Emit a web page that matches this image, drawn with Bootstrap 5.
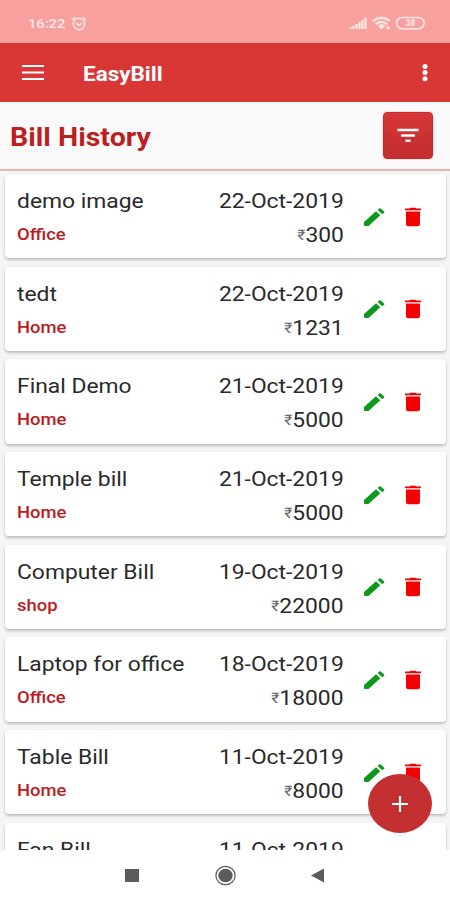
<!DOCTYPE html>
<html lang="en">
<head>
<meta charset="utf-8">
<meta name="viewport" content="width=device-width, initial-scale=1">
<title>EasyBill</title>
<link href="https://cdn.jsdelivr.net/npm/bootstrap@5.3.0/dist/css/bootstrap.min.css" rel="stylesheet">
<style>
body{font-family:Roboto,"Liberation Sans",sans-serif;background:#fff;color:#2a2a2a}
.screen{width:450px;height:900px}
.wide{display:inline-block;white-space:nowrap;transform:scaleX(1.088);transform-origin:0 50%}
.wide-end{transform-origin:100% 50%}
.status{height:43px;background:#f8a09e;color:#ffe9e7;padding:3px 25px 0 28px}
.clock{font-size:13.5px;font-weight:500;line-height:16px;width:43px}
.appbar{height:59px;background:#d93636;border-top:1px solid #cf3032;padding:0 20px 0 22px}
.brand{font-size:21px;font-weight:700;line-height:24px;margin:1px 0 0 39px;transform:scaleX(1.07)}
.page-head{height:69px;background:#fafafa;border-bottom:2px solid #e5b3b3;padding:0 17px 0 10px}
.page-title{font-size:26px;font-weight:700;color:#bd1e22;line-height:30px;margin-top:2px;transform:scaleX(1.098)}
.filter-btn{width:50px;height:47px;border-radius:4px;border:1px solid #c32c2f;background:linear-gradient(#d63638,#c22e30);box-shadow:0 0 2px #d99}
.bills{height:679px;background:#f5f5f5;padding:3px 4px 0 5px}
.bill{height:84.3px;margin-bottom:8.4px;background:#fff;border:0;border-radius:4px;box-shadow:0 2px 3px rgba(0,0,0,.22),0 0 2px rgba(0,0,0,.06);padding:14px 25px 0 12px;flex:none}
.line-big{font-size:21px;line-height:26px}
.kind{font-size:16px;font-weight:500;line-height:26px;color:#bd1a1e}
.kind .wide{transform:scaleX(1.15)}
.dates{margin-right:-1px}
.rupee{font-size:14.5px;color:#666;vertical-align:2px}
.gap-lines{margin-top:8px}
.tools{margin:18.500px 0 0 20.500px;gap:20px;height:21px}
.navkeys{height:49px;padding-top:1px}
.fab{left:368px;top:774px;width:64px;height:59px;border-radius:50%;background:#c43032}
svg{display:block;flex:none}
</style>
<script src="https://cdn.jsdelivr.net/npm/bootstrap@5.3.0/dist/js/bootstrap.bundle.min.js"></script>
</head>
<body>
<svg width="0" height="0" class="position-absolute">
<symbol id="pen" viewBox="0 0 22 20" preserveAspectRatio="none"><path fill="#0b9a1c" d="M1 15 13 4.300l4.300 4L5.500 19H2Q1 19 1 18zM14.600 3 16.200 1.500q.8-.6 1.600 0l3.300 2.900q.7.700 0 1.400L19.300 7.300z"/></symbol>
<symbol id="bin" viewBox="0 0 16 20" preserveAspectRatio="none"><path fill="#f40000" d="M0 1.500H4.500L5.500.7h5l1 .8H16V3.200H0zM1 4.600H15V17.300Q15 19.200 12.800 19.200H3.200Q1 19.200 1 17.300z"/></symbol>
</svg>
<main class="screen position-relative overflow-hidden">
<div class="status d-flex align-items-center">
<div class="clock"><span class="wide">16:22</span></div>
<svg class="me-auto" width="16" height="15" viewBox="0 0 16 15" fill="none" stroke="#ffe9e7" stroke-width="1.400"><circle cx="8" cy="8" r="5.700"/><path d="M1 4 4 1.200M15 4 12 1.200M5 7l3 2.500L11 7"/></svg>
<svg width="76" height="14" viewBox="0 0 76 14"><g stroke="#ffe9e7" fill="none"><path stroke-width="2.200" d="M1.500 13v-2M4.500 13V9.800M7.500 13V8M10.500 13V6M13.500 13V4M16.500 13V1.500"/><path stroke-width="2.200" d="M24 5q8.500-6.500 17 0M26.500 8.300q6-4.800 12 0"/><rect x="47.500" y="1.500" width="27.600" height="11.200" rx="5.600" stroke-width="1.600"/></g><path fill="#ffe9e7" d="m28.800 9.500 3.700 4 3.700-4q-3.700-2.500-7.400 0zM37.500 10.500h3v2.800h-3z"/><text x="56.500" y="10.200" font-size="8.500" font-weight="700" fill="#ffe9e7">38</text></svg>
</div>
<nav class="appbar d-flex align-items-center text-white">
<svg width="22" height="16" viewBox="0 0 22 16" stroke="#fff" stroke-width="2"><path d="M0 1h22M0 7.500h22M0 14h22"/></svg>
<span class="brand wide me-auto">EasyBill</span>
<svg width="10" height="20" viewBox="0 0 10 20" fill="#fff"><circle cx="5" cy="3.500" r="2.500"/><circle cx="5" cy="9.500" r="2.500"/><circle cx="5" cy="15.800" r="2.500"/></svg>
</nav>
<header class="page-head d-flex align-items-center justify-content-between">
<h1 class="page-title wide mb-0">Bill History</h1>
<button class="btn filter-btn p-0 d-flex align-items-center justify-content-center" aria-label="Filter"><svg width="22" height="15" viewBox="0 0 22 15" stroke="#fff" stroke-width="2.600"><path d="M.5 2h21M4 7.500h14M8.500 12.800h5"/></svg></button>
</header>
<section class="bills d-flex flex-column overflow-hidden" id="bills"></section>
<footer class="navkeys bg-white d-flex justify-content-center align-items-center">
<svg width="204" height="24" viewBox="0 0 204 24" fill="#5c5c5c"><path d="M2 6h14v13H2zM201 5.500v14l-13-7z"/><ellipse cx="102.500" cy="12.500" rx="7.200" ry="6.700"/><ellipse cx="102.500" cy="12.500" rx="9.600" ry="9.200" fill="none" stroke="#5c5c5c" stroke-width="1.200"/></svg>
</footer>
<button class="fab position-absolute border-0 p-0 d-flex align-items-center justify-content-center" aria-label="Add bill"><svg width="16" height="16" viewBox="0 0 16 16" stroke="#fff" stroke-width="2.200"><path d="M0 8h16M8 0v16"/></svg></button>
</main>
<script>
const bills=[["demo image","Office","22-Oct-2019","300"],["tedt","Home","22-Oct-2019","1231"],["Final Demo","Home","21-Oct-2019","5000"],["Temple bill","Home","21-Oct-2019","5000"],["Computer Bill","shop","19-Oct-2019","22000"],["Laptop for office","Office","18-Oct-2019","18000"],["Table Bill","Home","11-Oct-2019","8000"],["Fan Bill","","11-Oct-2019",""]];
document.getElementById("bills").innerHTML=bills.map(([n,k,d,a])=>`<article class="bill card flex-row align-items-start">
<div class="flex-grow-1"><div class="line-big"><span class="wide">${n}</span></div>${k?`<div class="kind gap-lines"><span class="wide">${k}</span></div>`:""}</div>
<div class="text-end line-big dates"><div><span class="wide wide-end">${d}</span></div>${a?`<div class="gap-lines"><span class="wide wide-end"><span class="rupee">₹</span>${a}</span></div>`:""}</div>
<div class="tools d-flex"><svg width="22" height="20"><use href="#pen"/></svg><svg width="16" height="20"><use href="#bin"/></svg></div></article>`).join("");
</script>
</body>
</html>
